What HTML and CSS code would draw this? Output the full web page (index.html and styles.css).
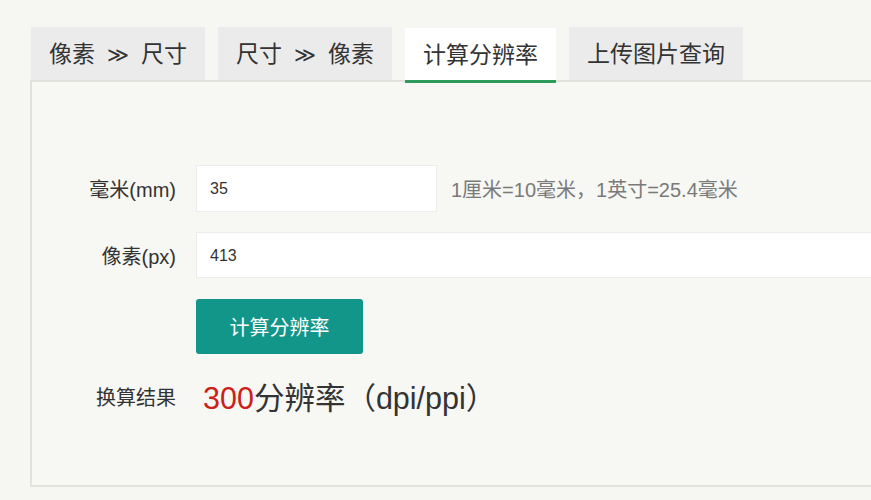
FILE: index.html
```html
<!DOCTYPE html>
<html lang="zh-CN">
<head>
<meta charset="utf-8">
<title>计算分辨率</title>
<link rel="stylesheet" href="styles.css">
</head>
<body>
<div class="page">
  <div class="tabs">
    <div class="tab">像素<span class="arr">≫</span>尺寸</div>
    <div class="tab">尺寸<span class="arr">≫</span>像素</div>
    <div class="tab active">计算分辨率</div>
    <div class="tab">上传图片查询</div>
  </div>
  <div class="panel">
    <div class="row">
      <label class="label">毫米(mm)</label>
      <div class="field">
        <div class="input short">35</div>
        <span class="hint">1厘米=10毫米，1英寸=25.4毫米</span>
      </div>
    </div>
    <div class="row">
      <label class="label">像素(px)</label>
      <div class="field">
        <div class="input long">413</div>
      </div>
    </div>
    <div class="row">
      <span class="label"></span>
      <div class="field">
        <button class="btn">计算分辨率</button>
      </div>
    </div>
    <div class="row result-row">
      <span class="label result-label">换算结果</span>
      <div class="field">
        <span class="result"><span class="num">300</span>分辨率（dpi/ppi）</span>
      </div>
    </div>
  </div>
</div>
</body>
</html>
```

FILE: styles.css
```css
html, body {
  margin: 0;
  padding: 0;
  background: #f6f6f2;
  font-family: "Liberation Sans", "Noto Sans CJK SC", sans-serif;
  color: #333;
  overflow: hidden;
}
.page {
  padding: 27px 0 0 30px;
}
.tabs {
  display: flex;
  gap: 13px;
  height: 53px;
  padding-left: 1px;
}
.tab {
  background: #ebebeb;
  font-family: "Noto Sans CJK SC", sans-serif;
  font-size: 23px;
  color: #333;
  height: 53px;
  line-height: 50px;
  padding: 0 18px;
  box-sizing: border-box;
  white-space: nowrap;
}
.arr {
  font-family: "DejaVu Sans", sans-serif;
  font-size: 21px;
  margin: 0 12px;
}
.tab.active {
  background: #fff;
  border-bottom: 3px solid #2d9b5c;
  position: relative;
  z-index: 1;
  margin-top: 1px;
  height: 55px;
}
.panel {
  border-style: solid;
  border-width: 2px 0 2px 2px;
  border-color: #e2e2dc;
  height: 407px;
  box-sizing: border-box;
  padding-top: 83px;
  background: #f7f7f3;
}
.row {
  display: grid;
  grid-template-columns: 144px 1fr;
  column-gap: 20px;
  align-items: center;
  margin-bottom: 20px;
}
.label {
  text-align: right;
  font-size: 20px;
  color: #333;
}
.field {
  display: flex;
  align-items: center;
}
.input {
  background: #fff;
  border: 1px solid #ececea;
  box-sizing: border-box;
  height: 47px;
  line-height: 45px;
  padding-left: 13px;
  font-size: 16px;
  color: #333;
}
.input.short { width: 241px; }
.input.long { flex: 1; height: 46px; border-right: 0; }
.hint {
  margin-left: 14px;
  font-size: 20px;
  color: #7a7a7a;
  white-space: nowrap;
}
.btn {
  background: #13968a;
  color: #fff;
  border: 0;
  border-radius: 3px;
  width: 167px;
  height: 55px;
  font-family: "Noto Sans CJK SC", sans-serif;
  font-size: 20px;
  padding: 0;
  margin-top: 1px;
}
.result-row { margin-top: 19px; }
.result-label { font-size: 20px; font-family: "Noto Sans CJK SC", sans-serif; }
.result {
  margin-left: 7px;
  font-size: 30.5px;
  color: #333;
}
.num { color: #cc201b; }
```
